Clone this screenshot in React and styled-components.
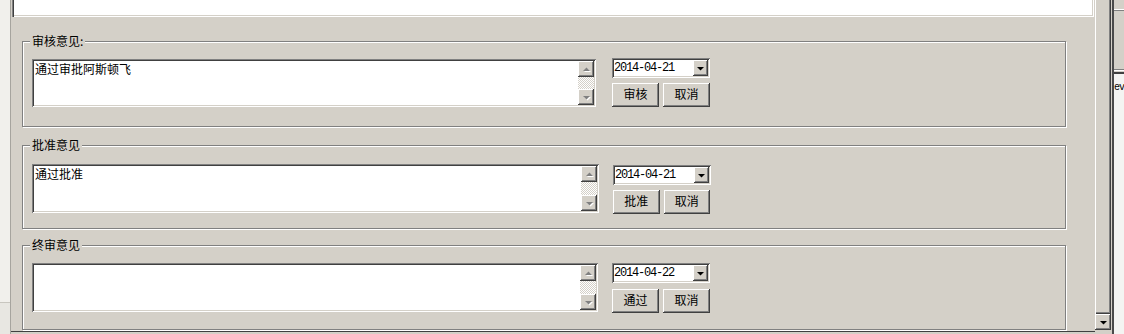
import styled, { createGlobalStyle } from "styled-components";

const FACE = "#d4d0c8";

const GlobalStyle = createGlobalStyle`
  html, body { margin: 0; padding: 0; }
  body {
    background: ${FACE};
    font-family: "Noto Sans CJK SC", "Liberation Sans", sans-serif;
    font-size: 12px;
    color: #000;
  }
`;

const sunken = `
  box-shadow: inset 1px 1px #808080, inset -1px -1px #fff,
    inset 2px 2px #404040, inset -2px -2px ${FACE};
`;

const raised = `
  box-shadow: inset -1px -1px #404040, inset 1px 1px #fff,
    inset -2px -2px #808080, inset 2px 2px ${FACE};
`;

const Frame = styled.div`
  display: flex;
  width: 1124px;
  height: 334px;
  overflow: hidden;
  background: ${FACE};
`;

const LeftStrip = styled.div`
  flex: none;
  width: 10px;
  display: flex;
  flex-direction: column;
  background: #f1f0ec;
  border-right: 1px solid #a6a49e;
`;

const LeftFoot = styled.div`
  margin-top: auto;
  height: 31px;
  border-top: 1px solid #c8c6bf;
  background: #e8e7e2;
`;

const MainPane = styled.div`
  flex: none;
  width: 1084px;
  height: 332px;
  box-sizing: border-box;
  border-bottom: 1px solid #404040;
  display: flex;
  flex-direction: column;
`;

const TopField = styled.div`
  flex: none;
  height: 17px;
  margin: 0 1px;
  background: #fff;
  box-shadow: inset 1px 0 #808080, inset 2px 0 #404040,
    inset -1px -1px #fff, inset -2px -2px ${FACE};
`;

const GroupBox = styled.div`
  position: relative;
  flex: none;
  box-sizing: border-box;
  width: 1044px;
  height: ${(p) => p.$h}px;
  margin: ${(p) => p.$mt}px 0 0 11px;
  padding: ${(p) => p.$pt}px 0 0 9px;
  border: 1px solid #808080;
  box-shadow: inset 1px 1px #fff, 1px 1px #fff;
`;

const Legend = styled.span`
  position: absolute;
  top: -8px;
  left: 7px;
  padding: 0 2px;
  line-height: 14px;
  background: ${FACE};
  white-space: nowrap;
`;

const GroupBody = styled.div`
  display: grid;
  grid-template-columns: ${(p) => p.$col}px 98px;
  align-items: start;
`;

const Memo = styled.div`
  display: flex;
  box-sizing: border-box;
  width: ${(p) => p.$w}px;
  height: ${(p) => p.$h}px;
  padding: 2px;
  background: #fff;
  ${sunken}
`;

const MemoText = styled.div`
  flex: 1;
  padding: 0 1px;
  line-height: 15px;
  white-space: pre;
`;

const MemoScroll = styled.div`
  flex: none;
  width: 16px;
  display: flex;
  flex-direction: column;
`;

const ScrollBtn = styled.div`
  flex: none;
  width: ${(p) => p.$w || 16}px;
  height: 16px;
  display: flex;
  align-items: center;
  justify-content: center;
  background: ${FACE};
  ${raised}
`;

const Track = styled.div`
  flex: 1;
  background-color: #fff;
  background-image: conic-gradient(${FACE} 25%, #fff 0 50%, ${FACE} 0 75%, #fff 0);
  background-size: 2px 2px;
`;

const SideCol = styled.div`
  display: flex;
  flex-direction: column;
  margin-top: ${(p) => p.$dy || 0}px;
  margin-left: ${(p) => p.$dx || 0}px;
`;

const DateCombo = styled.div`
  display: flex;
  box-sizing: border-box;
  width: 98px;
  height: 20px;
  padding: 2px;
  background: #fff;
  ${sunken}
`;

const DateText = styled.div`
  flex: 1;
  padding-left: 0;
  font-family: "Liberation Mono", "DejaVu Sans Mono", monospace;
  font-size: 12px;
  letter-spacing: -1.2px;
  line-height: 16px;
`;

const ButtonRow = styled.div`
  display: flex;
  gap: 4px;
  margin-top: ${(p) => p.$gap}px;
`;

const Button = styled.button`
  box-sizing: border-box;
  width: 47px;
  height: 24px;
  padding: 0 0 2px;
  border: none;
  background: ${FACE};
  font-family: "Noto Sans CJK SC", sans-serif;
  font-size: 12px;
  line-height: 14px;
  color: #000;
  ${raised}
`;

const VScroll = styled.div`
  flex: none;
  width: 16px;
  display: flex;
  flex-direction: column;
`;

const Thumb = styled.div`
  flex: none;
  height: 314px;
  background: ${FACE};
  box-shadow: inset 1px 0 #fff, inset -1px -1px #404040, inset -2px -2px #808080;
`;

const Divider = styled.div`
  flex: none;
  width: 3px;
  box-sizing: border-box;
  border-right: 2px solid #4a4a4a;
`;

const RightPanel = styled.div`
  flex: 1;
  min-width: 0;
  display: flex;
  flex-direction: column;
  overflow: hidden;
`;

const RpBlock = styled.div`
  flex: none;
  height: ${(p) => p.$h}px;
  background: ${(p) => p.$c || FACE};
`;

const RpBody = styled.div`
  flex: 1;
  background: #f4f4f2;
  padding: 8px 0 0 0;
  font-family: "Liberation Mono", monospace;
  font-size: 10px;
  letter-spacing: -1px;
  line-height: 12px;
  white-space: nowrap;
`;

const Arrow = ({ dir = "down", disabled }) => {
  const pts = dir === "up" ? "4,9 11,9 7.5,5.5" : "4,6 11,6 7.5,9.5";
  return (
    <svg width="15" height="15" viewBox="0 0 15 15">
      {disabled && <polygon points={pts} fill="#fff" transform="translate(1 1)" />}
      <polygon points={pts} fill={disabled ? "#808080" : "#000"} />
    </svg>
  );
};

const groups = [
  { title: "审核意见:", text: "通过审批阿斯顿飞", date: "2014-04-21", ok: "审核", h: 86, mt: 24, pt: 17, mw: 564, mh: 48, dx: 0, dy: -1, gap: 5 },
  { title: "批准意见", text: "通过批准", date: "2014-04-21", ok: "批准", h: 84, mt: 18, pt: 18, mw: 567, mh: 49, dx: 1, dy: 1, gap: 5 },
  { title: "终审意见", text: "", date: "2014-04-22", ok: "通过", h: 85, mt: 16, pt: 17, mw: 566, mh: 49, dx: 0, dy: 0, gap: 6 },
];

export default function App() {
  return (
    <>
      <GlobalStyle />
      <Frame>
        <LeftStrip>
          <LeftFoot />
        </LeftStrip>
        <MainPane>
          <TopField />
          {groups.map((g) => (
            <GroupBox key={g.title} $h={g.h} $mt={g.mt} $pt={g.pt}>
              <Legend>{g.title}</Legend>
              <GroupBody $col={580}>
                <Memo $w={g.mw} $h={g.mh}>
                  <MemoText>{g.text}</MemoText>
                  <MemoScroll>
                    <ScrollBtn>
                      <Arrow dir="up" disabled />
                    </ScrollBtn>
                    <Track />
                    <ScrollBtn>
                      <Arrow dir="down" disabled />
                    </ScrollBtn>
                  </MemoScroll>
                </Memo>
                <SideCol $dx={g.dx} $dy={g.dy}>
                  <DateCombo>
                    <DateText>{g.date}</DateText>
                    <ScrollBtn $w={15}>
                      <Arrow dir="down" />
                    </ScrollBtn>
                  </DateCombo>
                  <ButtonRow $gap={g.gap}>
                    <Button>{g.ok}</Button>
                    <Button>取消</Button>
                  </ButtonRow>
                </SideCol>
              </GroupBody>
            </GroupBox>
          ))}
        </MainPane>
        <VScroll>
          <Thumb />
          <ScrollBtn>
            <Arrow dir="down" />
          </ScrollBtn>
        </VScroll>
        <Divider />
        <RightPanel>
          <RpBlock $h={9} />
          <RpBlock $h={1} $c="#fff" />
          <RpBlock $h={1} $c="#808080" />
          <RpBlock $h={58} />
          <RpBlock $h={1} $c="#808080" />
          <RpBlock $h={1} $c="#fff" />
          <RpBlock $h={1} />
          <RpBlock $h={2} $c="#404040" />
          <RpBody>ev</RpBody>
        </RightPanel>
      </Frame>
    </>
  );
}
